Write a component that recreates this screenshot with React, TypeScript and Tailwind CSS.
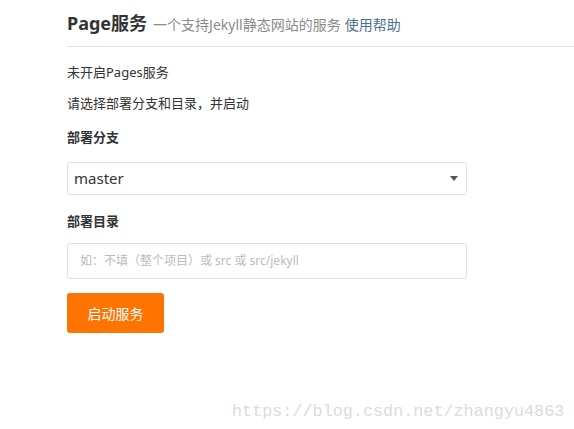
import React from "react";

export default function App() {
  return (
    <div
      className="w-[574px] h-[429px] bg-white relative overflow-hidden"
      style={{ fontFamily: '"Noto Sans", "Noto Sans CJK SC", sans-serif' }}
    >
      <div className="pl-[67px]">
        <div className="flex items-baseline pt-[10px] h-[47px] border-b border-[#e2e2e2]">
          <span className="text-[18px] font-bold text-[#333] leading-[26px]">Page服务</span>
          <span className="ml-[6px] text-[14px] text-[#8a8a8a]">一个支持Jekyll静态网站的服务</span>
          <span className="ml-[4px] text-[14px] text-[#51708c]">使用帮助</span>
        </div>
        <div className="w-[400px] text-[13px] text-[#333]">
          <div className="mt-[15px] leading-[20px]">未开启Pages服务</div>
          <div className="mt-[11px] leading-[20px]">请选择部署分支和目录，并启动</div>
          <div className="mt-[14px] leading-[20px] font-bold">部署分支</div>
          <div className="mt-[15px] h-[33px] border border-[#dde1e6] rounded-[3px] flex items-center justify-between pl-[6px] pr-[8px]">
            <span className="text-[15px] text-[#333]">master</span>
            <svg width="8" height="5" viewBox="0 0 8 5">
              <path d="M0 0h8L4 5z" fill="#555" />
            </svg>
          </div>
          <div className="mt-[16px] leading-[20px] font-bold">部署目录</div>
          <div className="mt-[12px] h-[36px] border border-[#dde1e6] rounded-[3px] flex items-center pl-[12px]">
            <span className="text-[12px] text-[#bbb]">如：不填（整个项目）或 src 或 src/jekyll</span>
          </div>
          <button className="mt-[14px] w-[97px] h-[40px] bg-[#ff7300] rounded-[3px] text-white text-[14px]">
            启动服务
          </button>
        </div>
      </div>
      <div
        className="absolute left-[232px] top-[399px] text-[16.8px] text-[#dcdcd8]"
        style={{ fontFamily: '"Liberation Mono", monospace' }}
      >
        https://blog.csdn.net/zhangyu4863
      </div>
    </div>
  );
}
